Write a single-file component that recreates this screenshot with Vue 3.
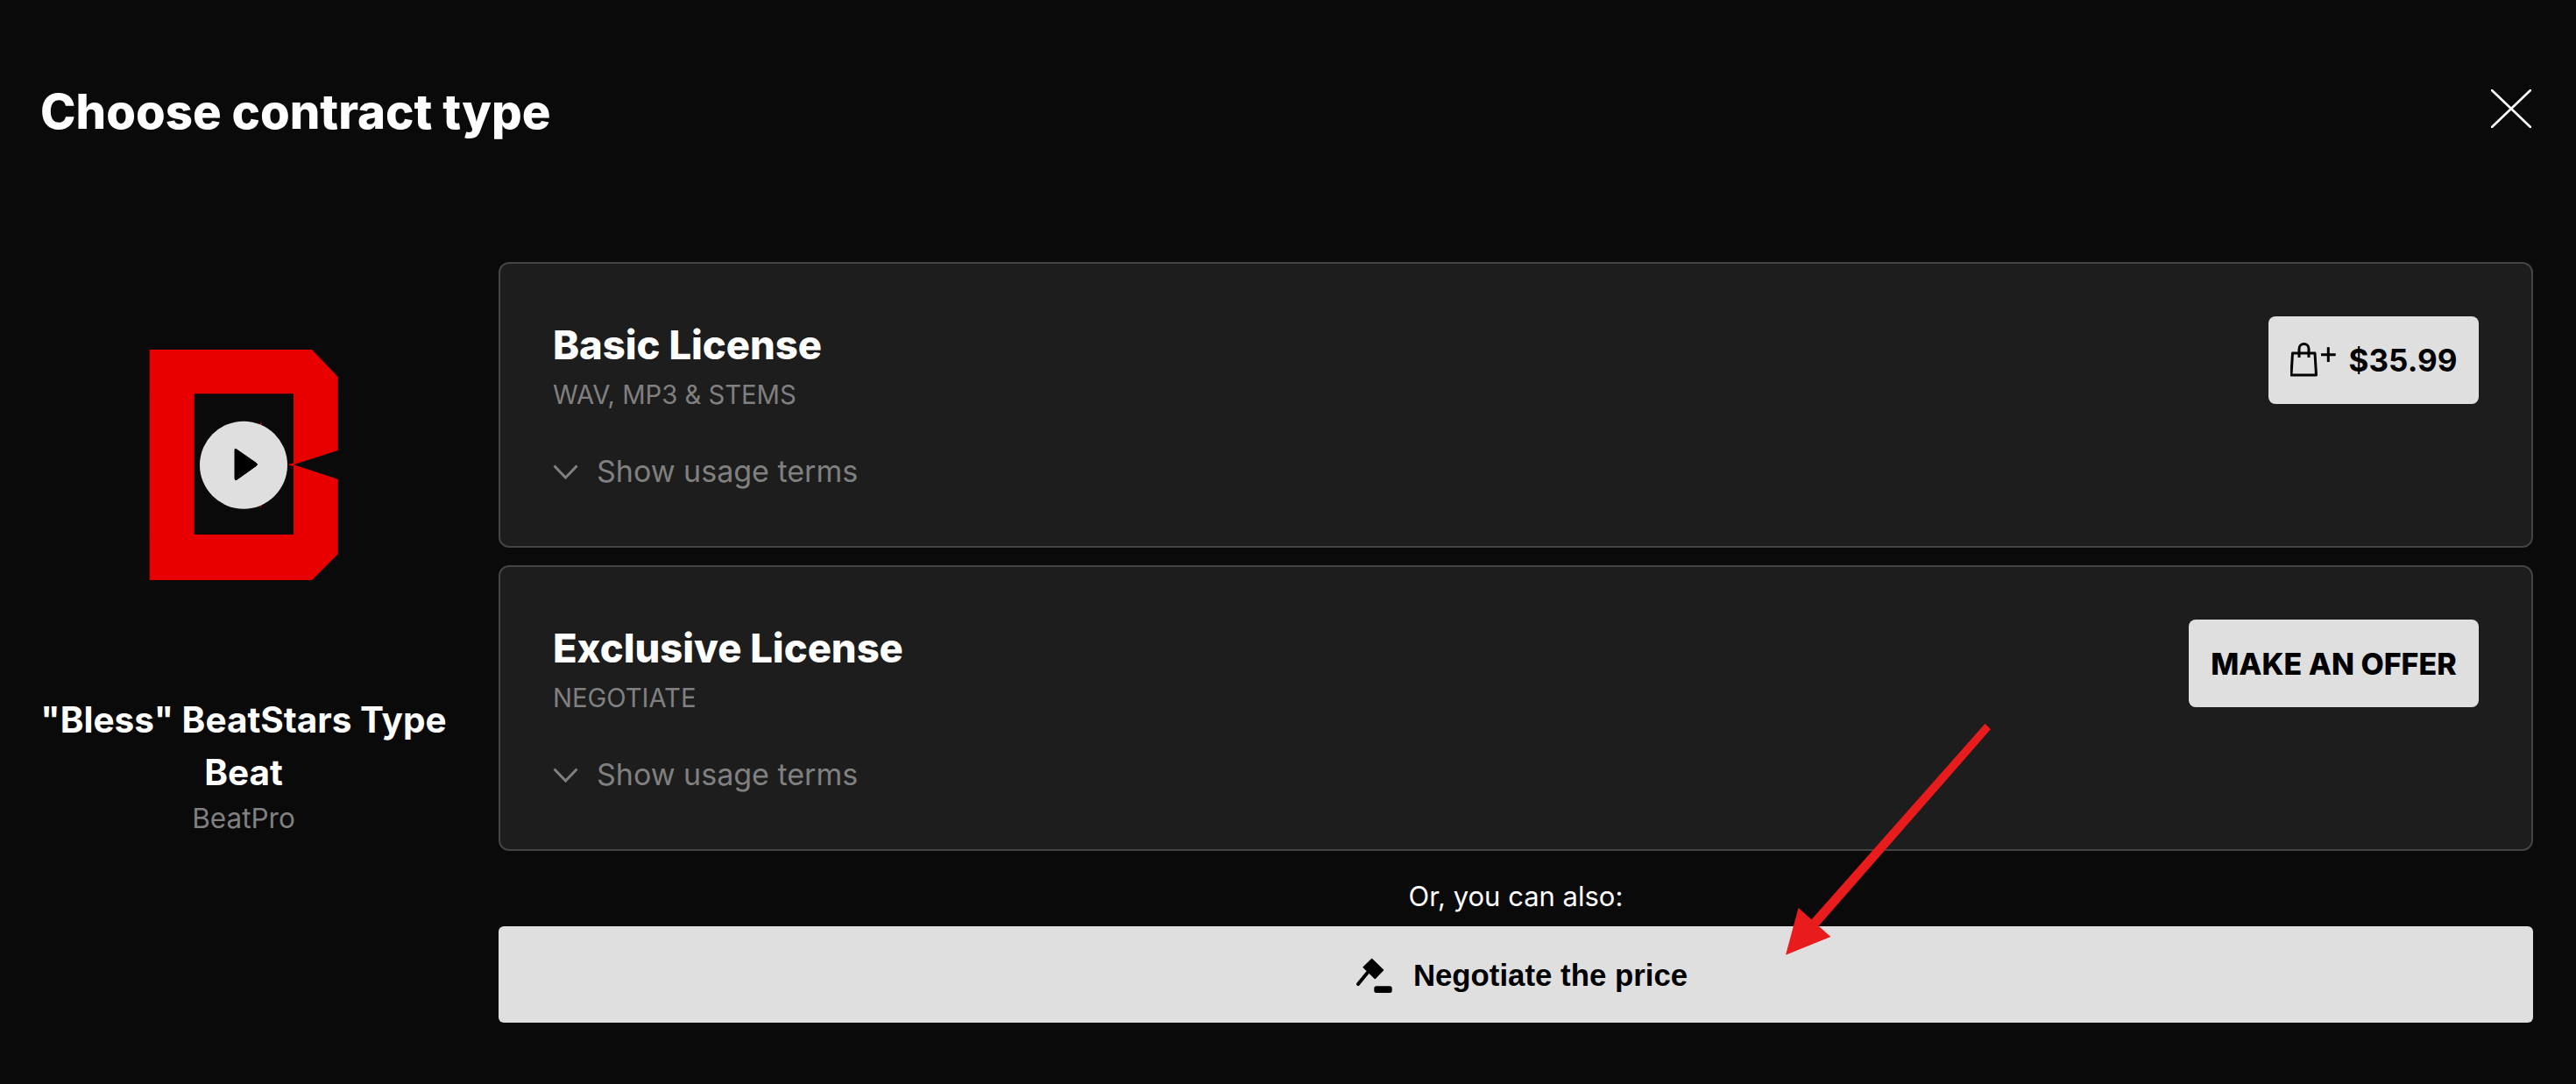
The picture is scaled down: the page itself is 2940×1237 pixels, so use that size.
<script setup>
const licenses = [
  { name: 'Basic License', sub: 'WAV, MP3 & STEMS', price: '$35.99' },
  { name: 'Exclusive License', sub: 'NEGOTIATE', offer: 'MAKE AN OFFER' }
]
</script>

<template>
  <div class="page">
    <header class="head">
      <h1 class="title">Choose contract type</h1>
      <svg class="close" viewBox="0 0 46 44" width="46" height="44">
        <path d="M1 1 45 43M45 1 1 43" stroke="#fff" stroke-width="2.6" stroke-linecap="round" fill="none" />
      </svg>
    </header>
    <main class="body">
      <aside class="side">
        <svg class="logo" viewBox="170 399 216 263" width="216" height="263">
          <path fill="#e80000" fill-rule="evenodd" d="M170.7 399H356L385.700 430V514L335 530.300 385.700 546.700V632.300L356 662H170.700ZM221.700 449.300V610H335V530.300 449.300Z" />
          <path fill="#e80000" d="M335 528.500 328 530.300 335 532ZM298 480 299 491 296 490ZM298 581 299 570 296 571Z" />
          <circle cx="278" cy="530.700" r="50" fill="#dfdfdf" />
          <path d="M269.500 512.500 292.500 528.500Q294.500 530 292.500 531.500L270 547.500Q268 548.500 268 546V513.500Q268 511.500 269.500 512.500Z" fill="#000" stroke="#000" stroke-width="1" stroke-linejoin="round" />
        </svg>
        <div class="track">"Bless" BeatStars Type Beat</div>
        <div class="author">BeatPro</div>
      </aside>
      <section class="main">
        <article v-for="l in licenses" :key="l.name" class="card">
          <div class="info">
            <h2 class="name">{{ l.name }}</h2>
            <div class="sub">{{ l.sub }}</div>
            <div class="terms">
              <svg width="29" height="17" viewBox="0 0 29 17"><path d="M1.500 1.500 14.500 15 27.500 1.500" fill="none" stroke="#808080" stroke-width="3" /></svg>
              <span>Show usage terms</span>
            </div>
          </div>
          <button class="buy" :class="{ offer: l.offer }">
            <template v-if="l.price">
              <svg class="bag" width="52" height="40" viewBox="0 0 52 40">
                <path d="M2.500 12H28L29.500 37H1Z" fill="none" stroke="#000" stroke-width="3" stroke-linejoin="round" />
                <path d="M10 17V7A5.500 5.500 0 0 1 21 7V17" fill="none" stroke="#000" stroke-width="3" />
                <path d="M35 13.700H51.700M43.300 5.300V22" fill="none" stroke="#000" stroke-width="3" />
              </svg>
              <span class="price">{{ l.price }}</span>
            </template>
            <span v-else>{{ l.offer }}</span>
          </button>
        </article>
        <div class="also">Or, you can also:</div>
        <button class="negotiate">
          <svg width="42" height="40" viewBox="0 0 42 40">
            <path d="M18.700 1.500 31.500 14 22.300 23.500 9.200 10.700Z" fill="#000" stroke="#000" stroke-width="1.500" stroke-linejoin="round" />
            <path d="M13.700 17 3 30" stroke="#000" stroke-width="4" stroke-linecap="round" fill="none" />
            <rect x="21.300" y="32.300" width="20.400" height="7.700" rx="2.500" fill="#000" />
          </svg>
          <span>Negotiate the price</span>
        </button>
      </section>
    </main>
    <svg class="arrow" viewBox="0 0 2940 1237" width="2940" height="1237">
      <polygon fill="#e81c1c" points="2265.6,825.7 2271.9,832.3 2075.6,1056.7 2089.4,1069 2038,1089.7 2052.5,1036 2067.5,1049.3" />
    </svg>
  </div>
</template>

<style scoped>
.page { position: relative; width: 2940px; height: 1237px; overflow: hidden; background: #0a0a0a; color: #fff; font-family: Inter, "Liberation Sans", sans-serif; }
.head { display: flex; justify-content: space-between; align-items: flex-start; height: 256px; padding: 0 51px 0 46px; box-sizing: border-box; }
.title { margin: 0; font-size: 54.500px; font-weight: 800; line-height: 1; padding-top: 100px; }
.close { margin-top: 102px; }
.body { display: flex; gap: 61px; padding: 43px 49px 0 48px; }
.side { width: 460px; flex: none; display: flex; flex-direction: column; align-items: center; text-align: center; padding-top: 100px; }
.logo { display: block; }
.track { font-size: 40.500px; font-weight: 700; line-height: 60px; margin: 130px -12px 0; }
.author { font-size: 31.500px; color: #808080; line-height: 40px; margin-top: 2px; }
.main { flex: 1; display: flex; flex-direction: column; gap: 20px; }
.card { height: 326px; box-sizing: border-box; border: 2px solid #444; border-radius: 12px; background: #1d1d1d; padding: 60px; display: flex; justify-content: space-between; align-items: flex-start; }
.info { padding-top: 3px; }
.name { margin: 0; font-size: 45.300px; font-weight: 800; line-height: 60px; }
.sub { font-size: 29.200px; color: #808080; line-height: 40px; margin-top: 7px; }
.terms { display: flex; align-items: center; gap: 21px; margin-top: 45px; font-size: 34px; color: #808080; line-height: 44px; }
.buy { width: 240px; height: 100px; border: 0; border-radius: 8px; background: #dfdfdf; color: #000; font-family: Inter, sans-serif; font-weight: 800; font-size: 34px; display: flex; align-items: center; justify-content: center; gap: 15px; padding: 0; }
.buy.offer { width: 331px; }
.price { font-weight: 700; font-size: 35px; }
.also { font-size: 31px; text-align: center; line-height: 40px; margin-top: 12px; margin-bottom: -6px; }
.negotiate { height: 110px; border: 0; border-radius: 6px; background: #dfdfdf; color: #000; font-family: "Liberation Sans", Arial, sans-serif; font-weight: 700; font-size: 34.800px; display: flex; align-items: center; justify-content: center; gap: 24px; padding: 2px 0 0 13px; }
.arrow { position: absolute; inset: 0; pointer-events: none; }
</style>

<style>
html, body { margin: 0; background: #0a0a0a; }
</style>
